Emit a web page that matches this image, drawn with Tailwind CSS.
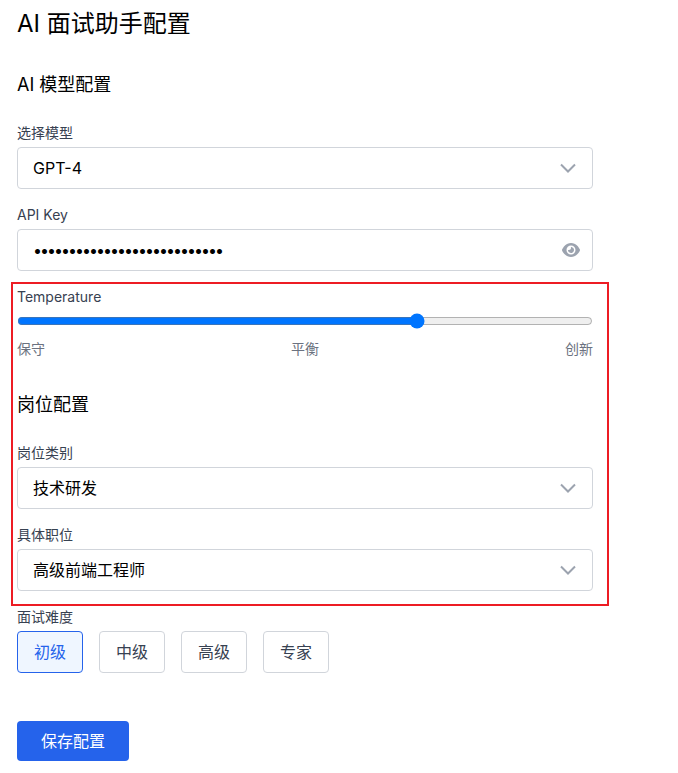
<!doctype html>
<html lang="zh">
<head>
<meta charset="utf-8">
<script src="https://cdn.jsdelivr.net/npm/@tailwindcss/browser@4"></script>
<title>AI 面试助手配置</title>
</head>
<body class="bg-white font-['Inter','Noto_Sans_CJK_SC',sans-serif]">
<div class="relative w-[678px] h-[773px] overflow-hidden">
  <div class="w-[576px] ml-[17px] pt-2">
    <h1 class="text-2xl leading-8 text-black">AI 面试助手配置</h1>

    <h2 class="mt-[31px] text-lg leading-7 text-black">AI 模型配置</h2>

    <label class="block mt-6 text-sm leading-5 text-[#374151]">选择模型</label>
    <div class="relative mt-1">
      <select class="w-full h-[42px] pl-[15px] pr-10 appearance-none bg-white border border-[#d1d5db] rounded text-base text-black"><option>GPT-4</option></select>
      <svg class="absolute right-[15px] top-[11px] w-[20px] h-[20px] text-[#9ca3af]" viewBox="0 0 20 20" fill="none" stroke="currentColor" stroke-width="2"><path d="M3 6.500 10 13.500l7-7"/></svg>
    </div>

    <label class="block mt-4 text-sm leading-5 text-[#374151]">API Key</label>
    <div class="relative mt-1">
      <input type="password" value="sk-abcdefghijklmnopqrstuvwx" class="w-full h-[42px] pl-[15px] pr-10 bg-white border border-[#d1d5db] rounded text-base text-black tracking-[-2px]">
      <svg class="absolute right-[13px] top-[13px] w-[18px] h-[16px] text-[#9ca3af]" viewBox="0 0 576 512" fill="currentColor"><path d="M288 32c-80.800 0-145.500 36.800-192.600 80.600C48.600 156 17.300 208 2.500 243.700c-3.300 7.900-3.300 16.700 0 24.600C17.300 304 48.600 356 95.400 399.400 142.500 443.200 207.200 480 288 480s145.500-36.800 192.600-80.600c46.800-43.500 78.100-95.400 93-131.100 3.300-7.900 3.300-16.700 0-24.600-14.900-35.700-46.200-87.700-93-131.100C433.500 68.800 368.800 32 288 32zM144 256a144 144 0 1 1 288 0 144 144 0 1 1-288 0zm144-64c0 35.300-28.700 64-64 64-7.100 0-13.900-1.200-20.300-3.300-5.500-1.800-11.900 1.600-11.700 7.400.3 6.900 1.300 13.800 3.200 20.700 13.700 51.200 66.400 81.600 117.600 67.900s81.600-66.400 67.900-117.600c-11.100-41.500-47.800-69.400-88.600-71.100-5.800-.2-9.200 6.100-7.400 11.700 2.100 6.400 3.300 13.200 3.300 20.300z"/></svg>
    </div>

    <label class="block mt-4 text-sm leading-5 text-[#374151]">Temperature</label>
    <input type="range" min="0" max="1" step="0.1" value="0.7" class="block w-full h-4 mt-[6px] m-0">
    <div class="flex justify-between mt-[10px] text-sm leading-5 text-[#6b7280]">
      <span>保守</span><span>平衡</span><span>创新</span>
    </div>

    <h2 class="mt-8 text-lg leading-7 text-black">岗位配置</h2>

    <label class="block mt-6 text-sm leading-5 text-[#374151]">岗位类别</label>
    <div class="relative mt-1">
      <select class="w-full h-[42px] pl-[15px] pr-10 appearance-none bg-white border border-[#d1d5db] rounded text-base text-black"><option>技术研发</option></select>
      <svg class="absolute right-[15px] top-[11px] w-[20px] h-[20px] text-[#9ca3af]" viewBox="0 0 20 20" fill="none" stroke="currentColor" stroke-width="2"><path d="M3 6.500 10 13.500l7-7"/></svg>
    </div>

    <label class="block mt-4 text-sm leading-5 text-[#374151]">具体职位</label>
    <div class="relative mt-1">
      <select class="w-full h-[42px] pl-[15px] pr-10 appearance-none bg-white border border-[#d1d5db] rounded text-base text-black"><option>高级前端工程师</option></select>
      <svg class="absolute right-[15px] top-[11px] w-[20px] h-[20px] text-[#9ca3af]" viewBox="0 0 20 20" fill="none" stroke="currentColor" stroke-width="2"><path d="M3 6.500 10 13.500l7-7"/></svg>
    </div>

    <label class="block mt-4 text-sm leading-5 text-[#374151]">面试难度</label>
    <div class="flex gap-4 mt-1">
      <button class="w-[66px] h-[42px] border border-[#2563eb] bg-[#eff6ff] rounded text-base text-[#2563eb]">初级</button>
      <button class="w-[66px] h-[42px] border border-[#d1d5db] bg-white rounded text-base text-[#374151]">中级</button>
      <button class="w-[66px] h-[42px] border border-[#d1d5db] bg-white rounded text-base text-[#374151]">高级</button>
      <button class="w-[66px] h-[42px] border border-[#d1d5db] bg-white rounded text-base text-[#374151]">专家</button>
    </div>

    <button class="block mt-12 w-[112px] h-10 bg-[#2563eb] rounded text-base text-white">保存配置</button>
  </div>
  <div class="absolute left-[11px] top-[282px] w-[598px] h-[324px] border-2 border-[#ed1c24] pointer-events-none"></div>
</div>
</body>
</html>
